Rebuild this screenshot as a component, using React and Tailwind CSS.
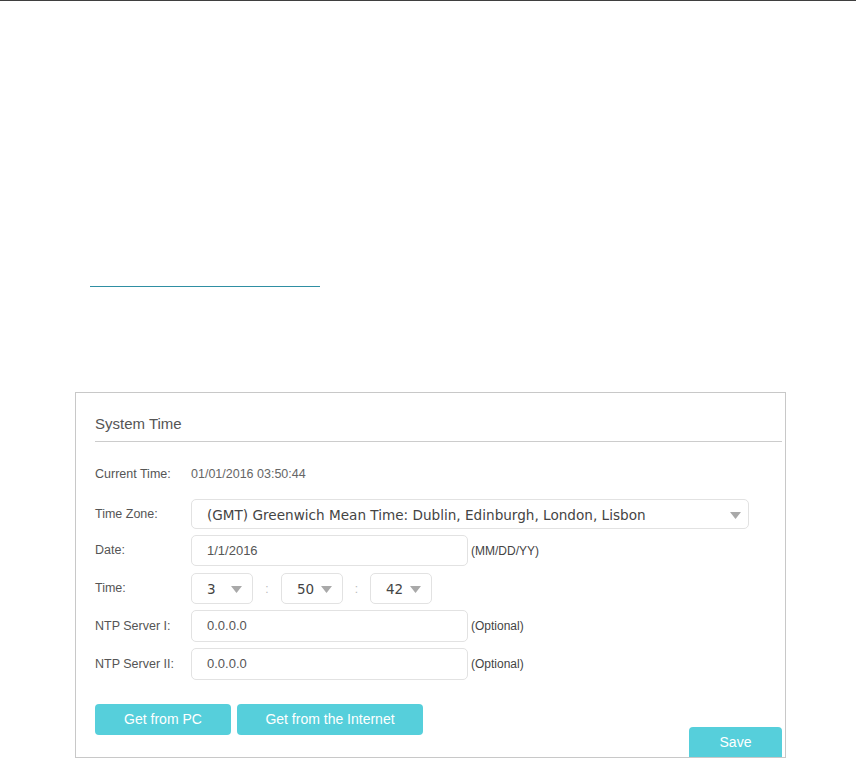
import React from "react";

const arial = { fontFamily: '"Liberation Sans", Arial, sans-serif' };

function Arrow() {
  return (
    <svg width="11" height="7" viewBox="0 0 11 7" className="shrink-0">
      <polygon points="0,0 11,0 5.5,7" fill="#a9a9a9" />
    </svg>
  );
}

function Label({ children }) {
  return (
    <div className="w-[96px] shrink-0 text-[12.5px] text-[#555]" style={arial}>
      {children}
    </div>
  );
}

function TimeSelect({ value }) {
  return (
    <div className="w-[62px] h-full border border-[#e2e2e2] rounded-[5px] flex items-center justify-between pl-[15px] pr-[10px] pt-[2px]">
      <span className="text-[13.5px] text-[#444] font-['DejaVu_Sans',sans-serif]">{value}</span>
      <Arrow />
    </div>
  );
}

function TextInput({ value }) {
  return (
    <div className="w-[277px] h-full border border-[#e2e2e2] rounded-[5px] flex items-center pl-[15px]">
      <span className="text-[13px] text-[#555]" style={arial}>{value}</span>
    </div>
  );
}

export default function App() {
  return (
    <div className="w-[856px] h-[758px] bg-white overflow-hidden relative" style={arial}>
      <div className="h-px bg-[#3f3f3f]" />
      <div className="mt-[285px] ml-[90px] w-[230px] h-px bg-[#2f8fa3]" />
      <div className="mt-[105px] ml-[75px] w-[711px] h-[366px] border border-[#c8c8c8] pl-[19px] pr-[3px] flex flex-col">
        <div className="mt-[22px] h-[18px] leading-[18px] text-[15px] text-[#555]">System Time</div>
        <div className="mt-[8px] h-px bg-[#cccccc]" />

        <div className="mt-[22px] h-[20px] flex items-center">
          <Label>Current Time:</Label>
          <span className="text-[12.5px] text-[#666]">01/01/2016 03:50:44</span>
        </div>

        <div className="mt-[15px] h-[30px] flex items-center">
          <Label>Time Zone:</Label>
          <div className="w-[558px] h-full border border-[#e2e2e2] rounded-[5px] flex items-center justify-between pl-[15px] pr-[7px] pt-[2px]">
            <span className="text-[13.6px] text-[#444] font-['DejaVu_Sans',sans-serif]">
              (GMT) Greenwich Mean Time: Dublin, Edinburgh, London, Lisbon
            </span>
            <Arrow />
          </div>
        </div>

        <div className="mt-[6px] h-[31px] flex items-center">
          <Label>Date:</Label>
          <TextInput value="1/1/2016" />
          <span className="ml-[3px] text-[12px] text-[#444]">(MM/DD/YY)</span>
        </div>

        <div className="mt-[7px] h-[31px] flex items-center">
          <Label>Time:</Label>
          <TimeSelect value="3" />
          <span className="w-[28px] text-center text-[12px] text-[#bbb]">:</span>
          <TimeSelect value="50" />
          <span className="w-[27px] text-center text-[12px] text-[#bbb]">:</span>
          <TimeSelect value="42" />
        </div>

        <div className="mt-[6px] h-[32px] flex items-center">
          <Label>NTP Server I:</Label>
          <TextInput value="0.0.0.0" />
          <span className="ml-[3px] text-[12px] text-[#444]">(Optional)</span>
        </div>

        <div className="mt-[6px] h-[32px] flex items-center">
          <Label>NTP Server II:</Label>
          <TextInput value="0.0.0.0" />
          <span className="ml-[3px] text-[12px] text-[#444]">(Optional)</span>
        </div>

        <div className="mt-[24px] flex-1 flex justify-between">
          <div className="flex gap-[6px] self-start">
            <div className="w-[136px] h-[31px] rounded-[4px] bg-[#56cfdb] text-white text-[14px] flex items-center justify-center">
              Get from PC
            </div>
            <div className="w-[186px] h-[31px] rounded-[4px] bg-[#56cfdb] text-white text-[14px] flex items-center justify-center">
              Get from the Internet
            </div>
          </div>
          <div className="self-end w-[93px] h-[30px] rounded-t-[4px] bg-[#56cfdb] text-white text-[14px] flex items-center justify-center">
            Save
          </div>
        </div>
      </div>
    </div>
  );
}
